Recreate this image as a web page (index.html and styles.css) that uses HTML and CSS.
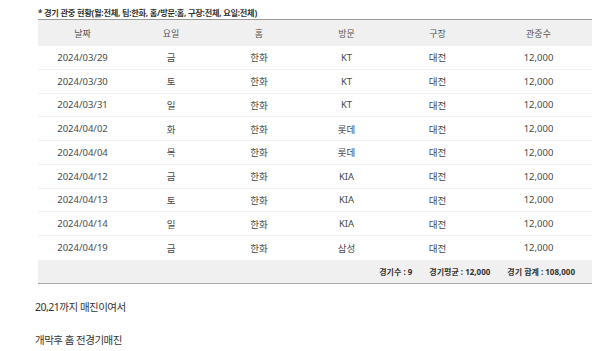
FILE: index.html
```html
<!DOCTYPE html>
<html lang="ko">
<head>
<meta charset="utf-8">
<link rel="stylesheet" href="styles.css">
</head>
<body>
<div class="wrap">
  <div class="title">* 경기 관중 현황(월:전체, 팀:한화, 홈/방문:홈, 구장:전체, 요일:전체)</div>
  <div class="table">
    <div class="row head"><span>날짜</span><span>요일</span><span>홈</span><span>방문</span><span>구장</span><span>관중수</span></div>
    <div class="row"><span>2024/03/29</span><span>금</span><span>한화</span><span>KT</span><span>대전</span><span>12,000</span></div>
    <div class="row"><span>2024/03/30</span><span>토</span><span>한화</span><span>KT</span><span>대전</span><span>12,000</span></div>
    <div class="row"><span>2024/03/31</span><span>일</span><span>한화</span><span>KT</span><span>대전</span><span>12,000</span></div>
    <div class="row"><span>2024/04/02</span><span>화</span><span>한화</span><span>롯데</span><span>대전</span><span>12,000</span></div>
    <div class="row"><span>2024/04/04</span><span>목</span><span>한화</span><span>롯데</span><span>대전</span><span>12,000</span></div>
    <div class="row"><span>2024/04/12</span><span>금</span><span>한화</span><span>KIA</span><span>대전</span><span>12,000</span></div>
    <div class="row"><span>2024/04/13</span><span>토</span><span>한화</span><span>KIA</span><span>대전</span><span>12,000</span></div>
    <div class="row"><span>2024/04/14</span><span>일</span><span>한화</span><span>KIA</span><span>대전</span><span>12,000</span></div>
    <div class="row last"><span>2024/04/19</span><span>금</span><span>한화</span><span>삼성</span><span>대전</span><span>12,000</span></div>
    <div class="foot"><span>경기수 : 9</span><span>경기평균 : 12,000</span><span>경기 합계 : 108,000</span></div>
  </div>
</div>
<p class="note first">20,21까지 매진이여서</p>
<p class="note">개막후 홈 전경기매진</p>
</body>
</html>
```

FILE: styles.css
```css
html, body {
  margin: 0;
  padding: 0;
  background: #fff;
}
body {
  font-family: "Noto Sans", "Noto Sans CJK KR", sans-serif;
  color: #444;
}
.wrap {
  margin-left: 38px;
  width: 554px;
  padding-top: 7px;
}
.title {
  font-size: 8.2px;
  font-weight: 700;
  color: #333;
  line-height: 12px;
  height: 12px;
  letter-spacing: -0.25px;
}
.table {
  border-top: 1px solid #9a9a9a;
}
.row {
  display: grid;
  grid-template-columns: 89px 88px 88px 87px 95px 107px;
  height: 23.75px;
  align-items: center;
  text-align: center;
  font-size: 9.5px;
  color: #4a4a4a;
  border-bottom: 1px solid #f1f1f1;
  box-sizing: border-box;
}
.row.head {
  background: #f0f0f0;
  height: 26px;
  font-size: 9px;
  color: #555;
  border-bottom: none;
}
.row.last {
  border-bottom: none;
}
.foot {
  display: flex;
  justify-content: flex-end;
  align-items: center;
  gap: 17px;
  height: 23px;
  padding-right: 17px;
  background: #f0f0f0;
  border-bottom: 1px solid #a8a8a8;
  font-size: 8px;
  font-weight: 700;
  color: #333;
}
.note {
  margin: 0 0 0 35px;
  font-size: 10.5px;
  letter-spacing: -0.5px;
  color: #333;
  line-height: 16px;
}
.note.first {
  margin-top: 15px;
}
.note + .note {
  margin-top: 17px;
}
```
